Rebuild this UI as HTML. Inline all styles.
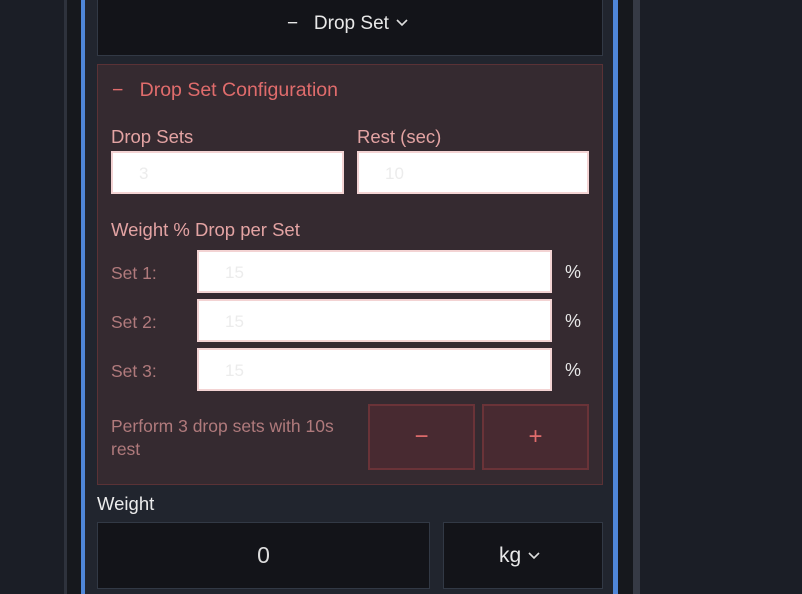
<!DOCTYPE html>
<html><head><meta charset="utf-8"><style>
*{box-sizing:border-box;margin:0;padding:0}
body{width:802px;height:594px;overflow:hidden;background:#1b1e26;font-family:"Liberation Sans",sans-serif;position:relative}
.a{position:absolute}
.inp{position:absolute;background:#fff;border:2px solid #f3d3d3;color:#ececec;font-size:17px;line-height:42px;padding-left:26px}
.lbl{position:absolute;font-size:18.5px;color:#e3a3a3}
.sl{position:absolute;font-size:17.5px;color:#b07a7c}
.pc{position:absolute;font-size:18px;color:#e8e8e8;left:565px}
.btn{position:absolute;background:#482a31;border:2px solid #6a3338;color:#e06c6c;font-size:24px;text-align:center;line-height:62px;top:404px;width:107px;height:66px}
</style></head><body>
<div class="a" style="left:64px;top:0;width:3px;height:594px;background:#2e323c"></div>
<div class="a" style="left:67px;top:0;width:14px;height:594px;background:#16181d"></div>
<div class="a" style="left:81px;top:0;width:4px;height:594px;background:#4f86d8"></div>
<div class="a" style="left:85px;top:0;width:528px;height:594px;background:#21252e"></div>
<div class="a" style="left:613px;top:0;width:5px;height:594px;background:#4f86d8"></div>
<div class="a" style="left:618px;top:0;width:15px;height:594px;background:#16181d"></div>
<div class="a" style="left:633px;top:0;width:7px;height:594px;background:#363a45"></div>

<div class="a" style="left:97px;top:-2px;width:506px;height:58px;background:#131419;border:1px solid #323945"></div>
<div class="a" style="left:287px;top:13px;font-size:19px;color:#e8e8e8">−&nbsp;&nbsp;&nbsp;Drop Set</div>
<svg class="a" style="left:395px;top:18px" width="14" height="10"><path d="M2 2 L7 7 L12 2" stroke="#ddd" stroke-width="1.6" fill="none"/></svg>

<div class="a" style="left:97px;top:64px;width:506px;height:421px;background:#352a30;border:1px solid #5a3236"></div>
<div class="a" style="left:112px;top:79px;font-size:19.5px;color:#e06c6c">−&nbsp;&nbsp;&nbsp;Drop Set Configuration</div>
<div class="lbl" style="left:111px;top:126px">Drop Sets</div>
<div class="lbl" style="left:357px;top:126px">Rest (sec)</div>
<div class="inp" style="left:111px;top:151px;width:233px;height:43px">3</div>
<div class="inp" style="left:357px;top:151px;width:232px;height:43px">10</div>
<div class="lbl" style="left:111px;top:219px">Weight % Drop per Set</div>
<div class="sl" style="left:111px;top:263px">Set 1:</div>
<div class="sl" style="left:111px;top:312px">Set 2:</div>
<div class="sl" style="left:111px;top:361px">Set 3:</div>
<div class="inp" style="left:197px;top:250px;width:355px;height:43px">15</div>
<div class="inp" style="left:197px;top:299px;width:355px;height:43px">15</div>
<div class="inp" style="left:197px;top:348px;width:355px;height:43px">15</div>
<div class="pc" style="top:262px">%</div>
<div class="pc" style="top:311px">%</div>
<div class="pc" style="top:360px">%</div>
<div class="a" style="left:111px;top:415px;font-size:17.5px;line-height:23px;color:#b07a7c;width:250px">Perform 3 drop sets with 10s rest</div>
<div class="btn" style="left:368px">−</div>
<div class="btn" style="left:482px">+</div>

<div class="a" style="left:97px;top:493px;font-size:18.5px;color:#ececec">Weight</div>
<div class="a" style="left:97px;top:522px;width:333px;height:67px;background:#131419;border:1px solid #323945;color:#ddd;font-size:23px;text-align:center;line-height:65px">0</div>
<div class="a" style="left:443px;top:522px;width:160px;height:67px;background:#131419;border:1px solid #323945;color:#e8e8e8;font-size:21px;line-height:65px;padding-left:55px">kg</div>
<svg class="a" style="left:527px;top:551px" width="14" height="10"><path d="M2 2 L7 7 L12 2" stroke="#ddd" stroke-width="1.6" fill="none"/></svg>
</body></html>
